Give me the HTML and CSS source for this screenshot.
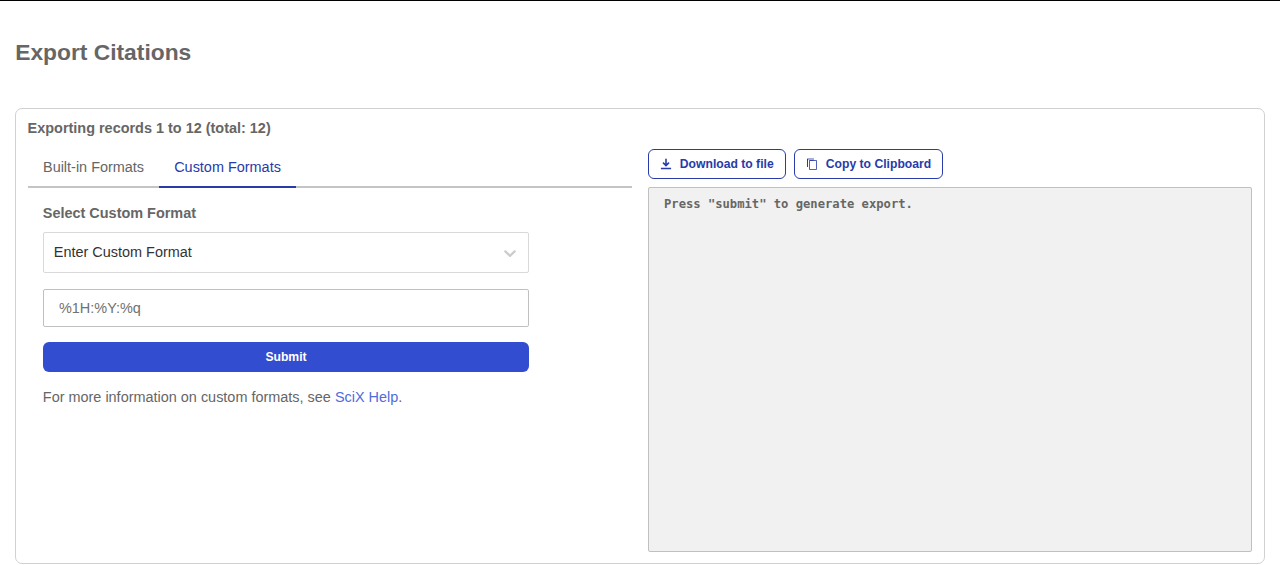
FILE: index.html
```html
<!DOCTYPE html>
<html lang="en">
<head>
<meta charset="utf-8">
<title>Export Citations</title>
<link rel="stylesheet" href="styles.css">
</head>
<body>
<main class="page">
  <h1 class="title">Export Citations</h1>
  <section class="panel">
    <h2 class="summary">Exporting records 1 to 12 (total: 12)</h2>
    <div class="columns">
      <div class="column">
        <div class="tabs" role="tablist">
          <button class="tab" role="tab">Built-in Formats</button>
          <button class="tab tab-active" role="tab" aria-selected="true">Custom Formats</button>
        </div>
        <form class="form">
          <span class="label">Select Custom Format</span>
          <div class="select">
            <span>Enter Custom Format</span>
            <svg class="chevron" width="20" height="20" viewBox="0 0 20 20"><path d="M4.516 7.548c0.436-0.446 1.043-0.481 1.576 0l3.908 3.747 3.908-3.747c0.533-0.481 1.141-0.446 1.574 0 0.436 0.445 0.408 1.197 0 1.615-0.406 0.418-4.695 4.502-4.695 4.502-0.217 0.223-0.502 0.335-0.787 0.335s-0.57-0.112-0.789-0.335c0 0-4.287-4.084-4.695-4.502s-0.436-1.17 0-1.615z"/></svg>
          </div>
          <input class="input" type="text" value="%1H:%Y:%q" aria-label="Custom format">
          <button class="submit" type="button">Submit</button>
          <p class="help">For more information on custom formats, see <a class="link" href="#">SciX Help</a>.</p>
        </form>
      </div>
      <div class="column">
        <div class="actions">
          <button class="action action-download"><svg width="12" height="12" viewBox="0 0 12 12"><path d="M6 .7v6.800M3 4.700l3 2.900 3-2.900M.9 10.500h10.200" fill="none" stroke="currentColor" stroke-width="1.600"/></svg>Download to file</button>
          <button class="action action-copy"><svg width="12" height="12" viewBox="0 0 12 12"><path d="M1.500 9V.8" fill="none" stroke="currentColor"/><path d="M3.500 2.500h7v9h-7zM3.500 2.500h4" fill="none" stroke="currentColor" stroke-opacity=".8"/><path d="M1.500 1h6.500" fill="none" stroke="currentColor" stroke-opacity=".55" stroke-width="1.500"/></svg>Copy to Clipboard</button>
        </div>
        <textarea class="output" readonly aria-label="Export output">Press "submit" to generate export.</textarea>
      </div>
    </div>
  </section>
</main>
</body>
</html>
```
FILE: styles.css
```css
* { box-sizing: border-box; }
body {
  margin: 0;
  border-top: 1px solid #000;
  background: #fff;
  color: #666;
  font: 14.440px/22px "Liberation Sans", Arial, sans-serif;
}
button { font-family: inherit; cursor: pointer; }
.page { padding: 37px 15.200px 0; }
.title { margin: 0; font-size: 22.800px; line-height: 28px; }
.panel {
  height: 456px;
  margin: 42px -0.200px 0;
  padding: 8px 12px 11px;
  border: 1px solid #d1d1d1;
  border-radius: 7px;
}
.summary { margin: 0 0 0 -0.400px; font-size: 14.440px; line-height: 22px; }
.columns { display: grid; grid-template-columns: 1fr 1fr; gap: 16px; }
.column { min-width: 0; }
.tabs { display: flex; height: 49px; padding-top: 10px; border-bottom: 2px solid #c4c4c4; }
.tab {
  height: 39px;
  margin-bottom: -2px;
  padding: 0 15.100px 2px 15px;
  border: 0;
  border-bottom: 2px solid transparent;
  background: none;
  color: inherit;
  font-size: 14.440px;
}
.tab-active { color: #283ba8; border-color: #283ba8; }
.form { display: flex; flex-direction: column; width: 516px; padding: 14px 15px 0; }
.label { margin-left: -0.200px; font-weight: bold; }
.select {
  display: flex;
  align-items: center;
  justify-content: space-between;
  height: 41px;
  margin-top: 8px;
  padding: 0 8px 0 9.800px;
  border: 1px solid #d9d9d9;
  border-radius: 2px;
  color: #333;
}
.select span { padding-bottom: 2px; }
.chevron { fill: #ccc; }
.input {
  height: 38px;
  margin-top: 16px;
  padding: 0 15px;
  border: 1px solid #c0c0c0;
  border-radius: 2px;
  color: #717171;
  font: inherit;
}
.submit {
  height: 30px;
  margin-top: 15px;
  border: 0;
  border-radius: 6px;
  background: #324dcf;
  color: #fff;
  font-size: 12.160px;
  font-weight: bold;
}
.help { margin: 14px 0 0 -0.200px; }
.link { color: #506cdb; text-decoration: none; }
.actions { display: flex; gap: 8px; padding: 10px 0 8px; }
.action {
  display: flex;
  align-items: center;
  gap: 7.800px;
  height: 30px;
  padding: 0 11px;
  border: 1px solid #283ba8;
  border-radius: 6px;
  background: #fff;
  color: #283ba8;
  font-size: 12.160px;
  font-weight: bold;
  white-space: nowrap;
}
.action svg { flex: none; }
.action-download { width: 138px; }
.action-copy { width: 149px; }
.output {
  display: block;
  width: 100%;
  height: 365px;
  padding: 7px 15px;
  border: 1px solid #c0c0c0;
  border-radius: 2px;
  background: #f1f1f1;
  color: #666;
  font: bold 12.160px/18px "DejaVu Sans Mono", monospace;
  resize: none;
}
```
